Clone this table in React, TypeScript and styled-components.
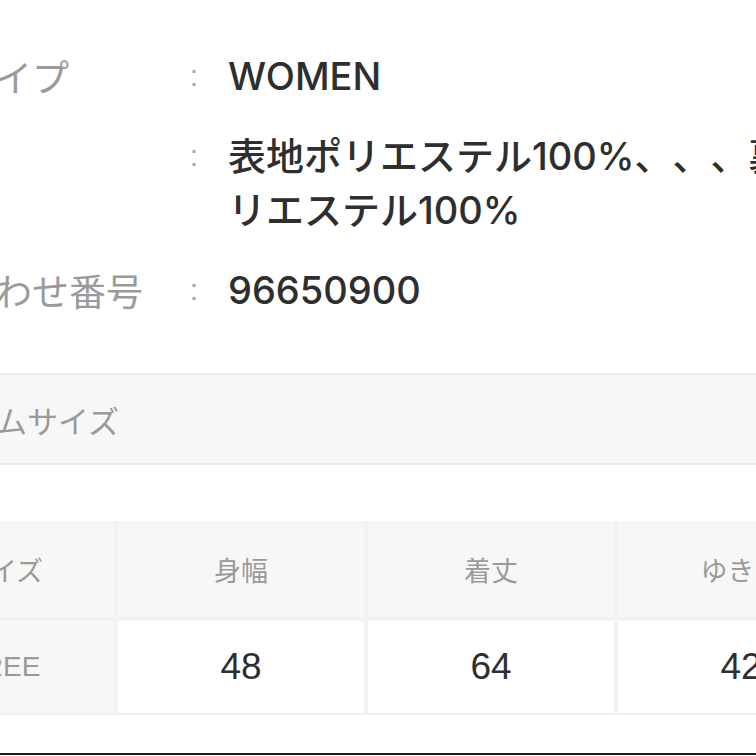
import styled, { createGlobalStyle } from 'styled-components';

const GlobalStyle = createGlobalStyle`
  html, body {
    margin: 0;
    background: #fff;
    overflow: hidden;
  }
  body {
    font-family: "Noto Sans CJK JP", sans-serif;
  }
`;

const specs = [
  { label: '対象者タイプ', lines: ['WOMEN'] },
  { label: '素材', lines: ['表地ポリエステル100%、、、裏地ポ', 'リエステル100%'] },
  { label: 'お問い合わせ番号', lines: ['96650900'] },
];

const sizeHeads = ['身幅', '着丈', 'ゆき丈'];
const sizeRows = [{ size: 'FREE', values: ['48', '64', '42'] }];

export default function App() {
  return (
    <>
      <GlobalStyle />
      <Page>
        <SpecList>
          {specs.map((s) => (
            <SpecRow key={s.label}>
              <SpecLabel>{s.label}</SpecLabel>
              <Colon>:</Colon>
              <SpecValue>
                {s.lines.map((line) => (
                  <Line key={line}>{line}</Line>
                ))}
              </SpecValue>
            </SpecRow>
          ))}
        </SpecList>

        <SectionHead>アイテムサイズ</SectionHead>

        <SizeTable>
          <HeadCell>サイズ</HeadCell>
          {sizeHeads.map((h) => (
            <HeadCell key={h}>{h}</HeadCell>
          ))}
          {sizeRows.map((r) => [
            <SizeCell key={r.size}>{r.size}</SizeCell>,
            ...r.values.map((v, i) => <ValueCell key={r.size + i}>{v}</ValueCell>),
          ])}
        </SizeTable>

        <BottomRule />
      </Page>
    </>
  );
}

const Page = styled.div`
  width: 1100px;
  margin-left: -153px;
  padding-top: 49px;
`;

const SpecList = styled.div`
  display: flex;
  flex-direction: column;
  gap: 26px;
`;

const SpecRow = styled.div`
  display: grid;
  grid-template-columns: 330px 34px 1fr;
  line-height: 54px;
`;

const SpecLabel = styled.div`
  font-size: 37px;
  color: #9a9a9a;
  white-space: nowrap;
`;

const Colon = styled.div`
  font-family: "Liberation Sans", sans-serif;
  font-size: 30px;
  color: #a8a8a8;
  text-align: center;
`;

const SpecValue = styled.div`
  margin-left: 17px;
  font-family: Inter, "Noto Sans CJK JP", sans-serif;
  font-size: 38px;
  font-weight: 500;
  color: #2e2e2e;
  text-spacing-trim: space-all;
`;

const Line = styled.span`
  display: block;
  white-space: nowrap;
`;

const SectionHead = styled.div`
  margin-top: 56px;
  height: 88px;
  padding-left: 59px;
  display: flex;
  align-items: center;
  background: #f7f7f7;
  border-top: 2px solid #ececec;
  border-bottom: 2px solid #ececec;
  font-size: 31px;
  color: #9a9a9a;
`;

const SizeTable = styled.div`
  margin-top: 56px;
  margin-left: 45px;
  display: grid;
  grid-template-columns: 222px repeat(3, 246px);
  grid-template-rows: 96px 92px;
  gap: 4px;
  width: max-content;
  background: #f2f2f2;
  border-bottom: 2px solid #f0f0f0;
`;

const HeadCell = styled.div`
  display: flex;
  align-items: center;
  justify-content: center;
  background: #f7f7f7;
  font-size: 27px;
  color: #9a9a9a;
`;

const SizeCell = styled(HeadCell)`
  font-family: "Liberation Sans", sans-serif;
  font-size: 28px;
`;

const ValueCell = styled.div`
  display: flex;
  align-items: center;
  justify-content: center;
  background: #fff;
  font-family: "Liberation Sans", sans-serif;
  font-size: 37px;
  color: #2e2e2e;
`;

const BottomRule = styled.div`
  margin-top: 38px;
  height: 2px;
  background: #1a1a1a;
`;
